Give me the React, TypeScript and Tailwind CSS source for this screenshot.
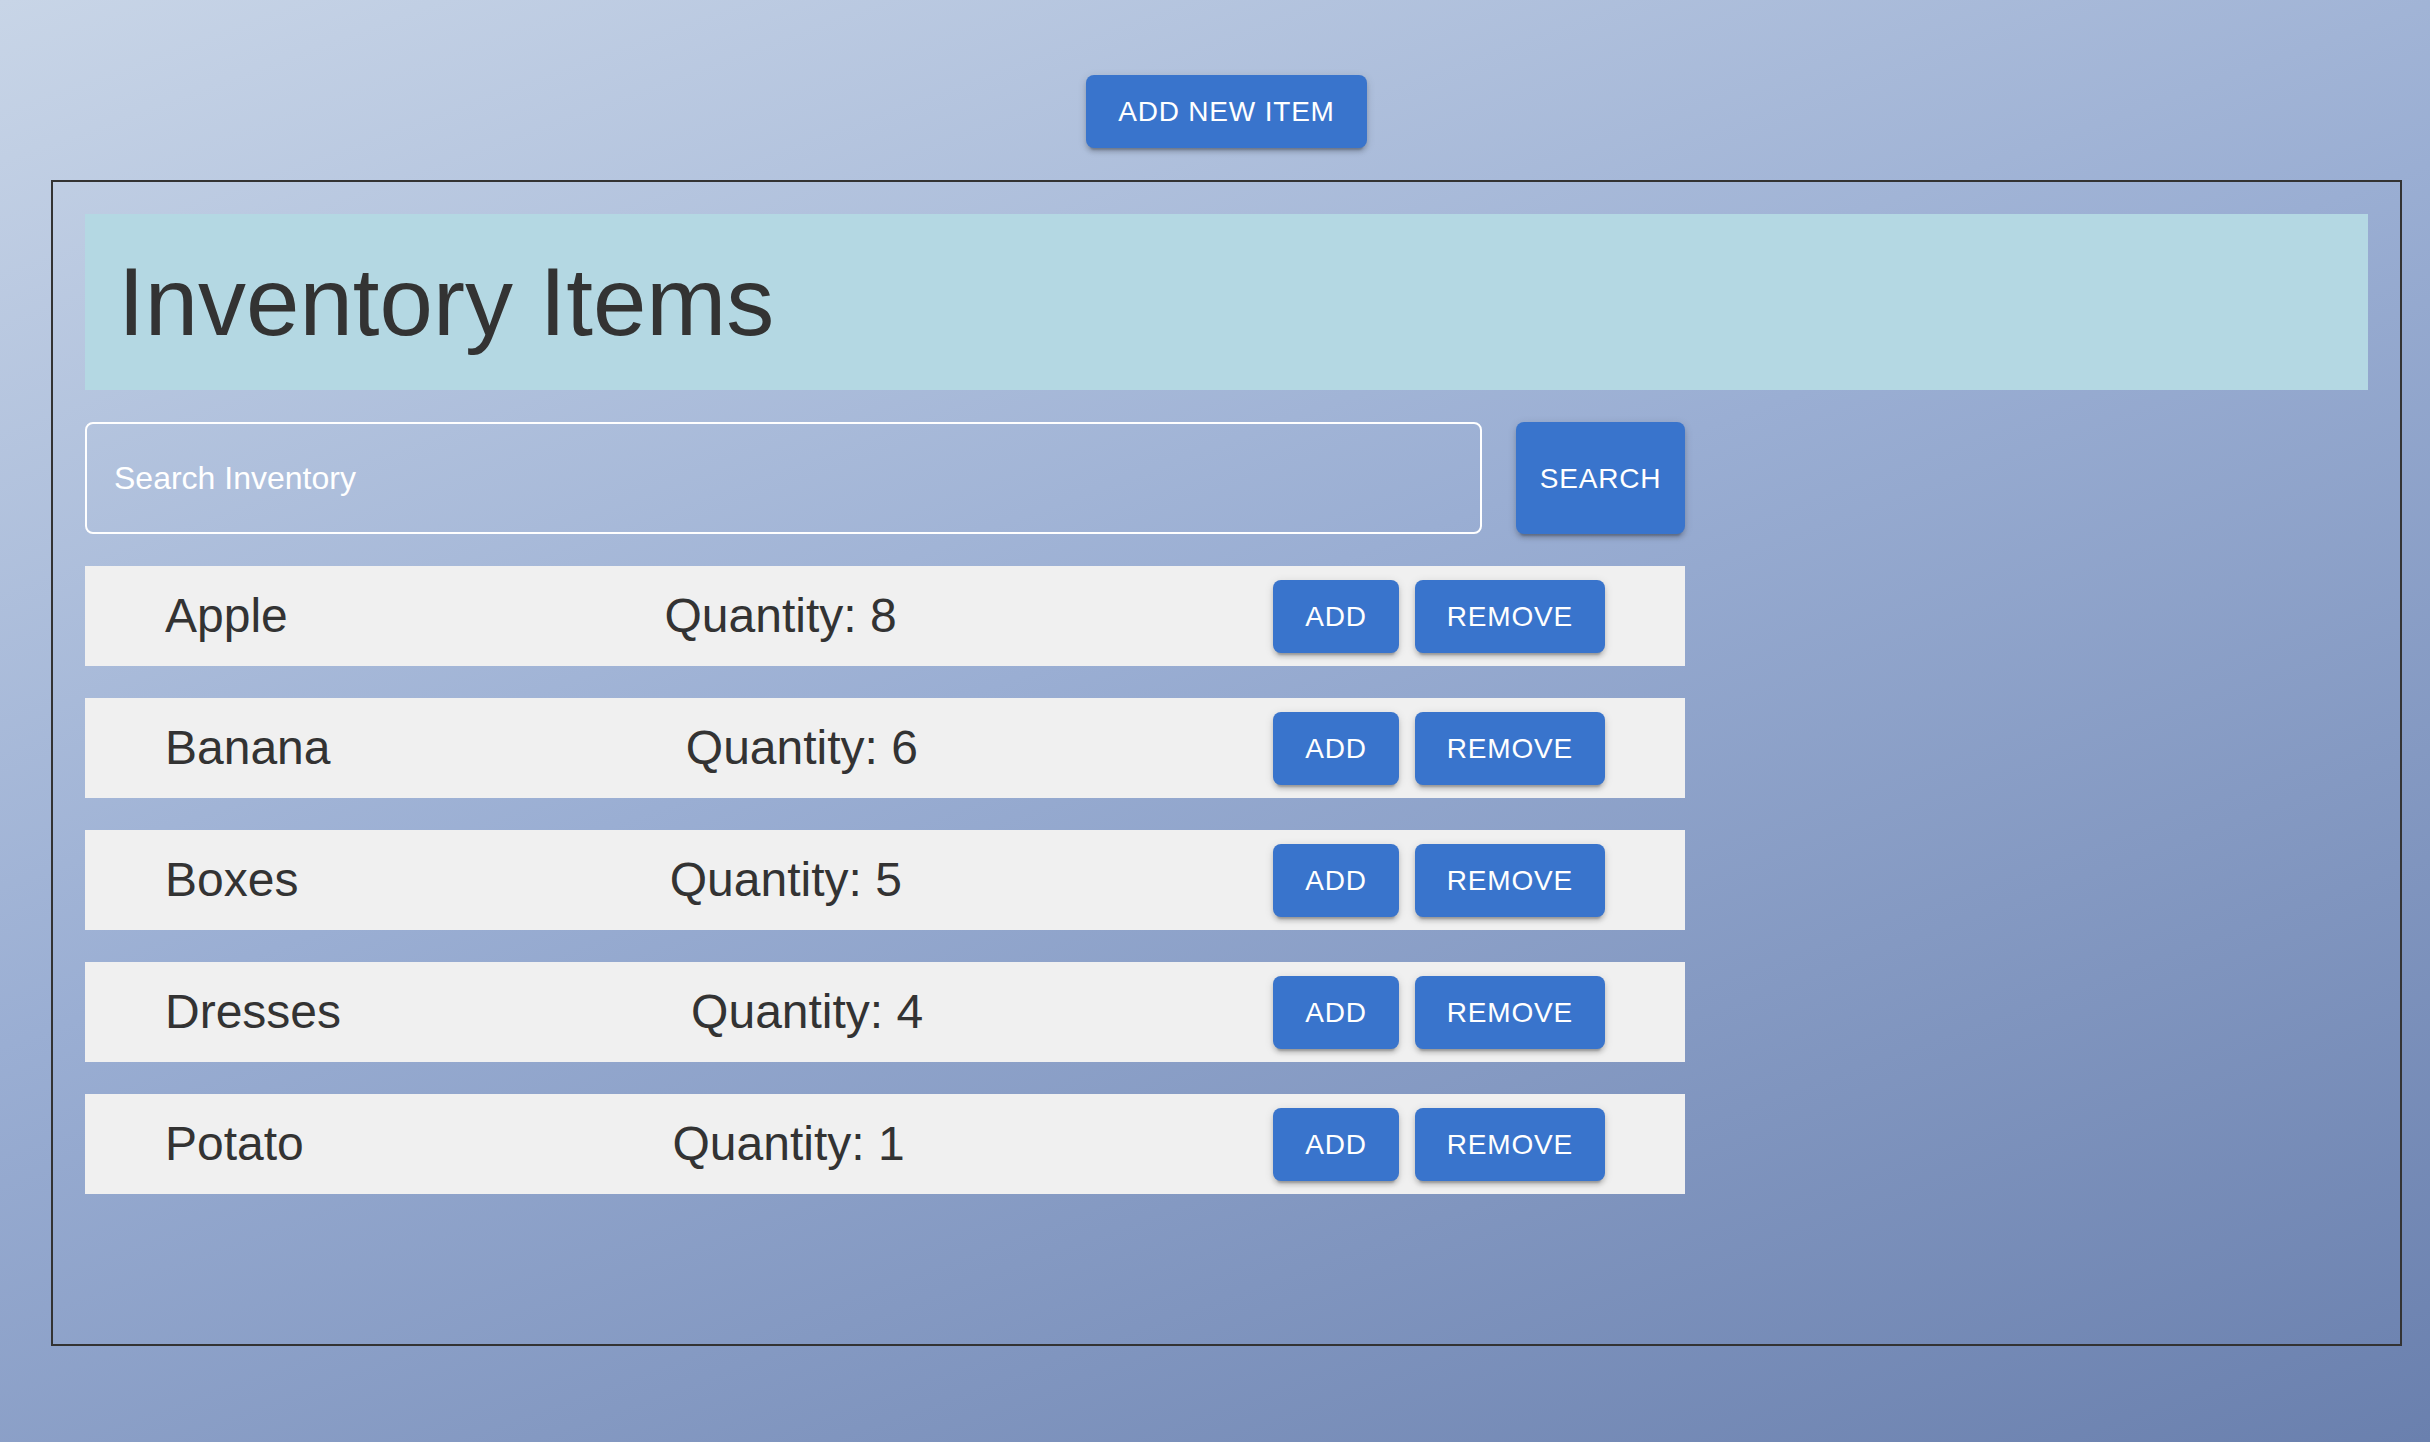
import React from 'react';

const items = [
  { name: 'Apple', quantity: 8 },
  { name: 'Banana', quantity: 6 },
  { name: 'Boxes', quantity: 5 },
  { name: 'Dresses', quantity: 4 },
  { name: 'Potato', quantity: 1 },
];

const base =
  "bg-[#3974cc] text-white text-[28px] leading-[49px] tracking-[0.8px] uppercase rounded-lg shadow-[0_6px_2px_-4px_rgba(0,0,0,0.2),0_4px_4px_0_rgba(0,0,0,0.14),0_2px_10px_0_rgba(0,0,0,0.12)]";
const btn = `${base} px-8 py-3`;

const App = () => {
  return (
    <div className="min-h-screen w-full bg-[linear-gradient(160deg,#c8d5e7_0%,#9aaed3_45%,#6a80ae_100%)] font-['Liberation_Sans',Arial,sans-serif] pl-[51px] pr-[28px] pt-[75px]">
      <div className="flex justify-center">
        <button className={btn} type="button">
          Add New Item
        </button>
      </div>

      <div className="mt-[32px] h-[1166px] border-2 border-[#333] p-8 flex flex-col gap-8">
        <div className="bg-[#b4d8e3] pl-[33px] py-8">
          <h1 className="text-[96px] leading-[112px] text-[#333]">Inventory Items</h1>
        </div>

        <div className="w-[1600px] flex flex-col gap-8">
          <div className="flex gap-[34px]">
            <input
              className="flex-1 h-[112px] border-2 border-white rounded-lg bg-transparent px-[27px] text-[32px] text-white placeholder:text-white outline-none"
              placeholder="Search Inventory"
              type="text"
            />
            <button className={`${base} w-[169px] h-[112px] flex items-center justify-center`} type="button">
              Search
            </button>
          </div>

          {items.map((item) => (
            <div
              key={item.name}
              className="h-[100px] bg-[#f0f0f0] px-20 flex items-center justify-between text-[48px] text-[#333]"
            >
              <span>{item.name}</span>
              <span>Quantity: {item.quantity}</span>
              <div className="flex gap-4">
                <button className={btn} type="button">
                  Add
                </button>
                <button className={btn} type="button">
                  Remove
                </button>
              </div>
            </div>
          ))}
        </div>
      </div>
    </div>
  );
};

export default App;
